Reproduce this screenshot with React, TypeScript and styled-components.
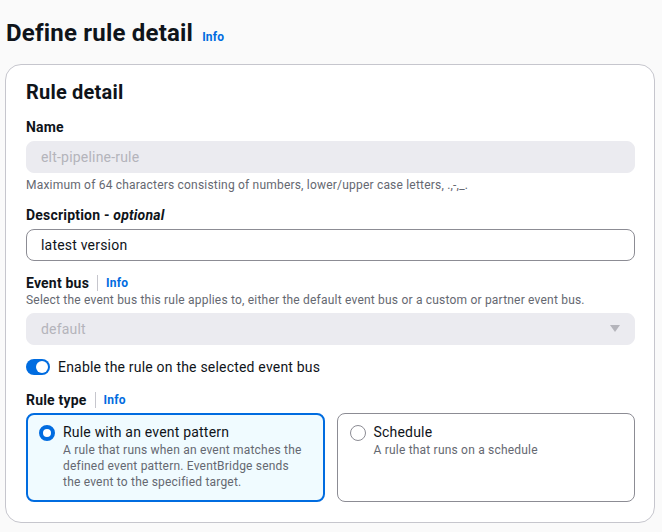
import React from "react";
import styled, { createGlobalStyle } from "styled-components";

const Global = createGlobalStyle`
  html, body { margin: 0; padding: 0; background: #fafafa; }
  body { font-family: Roboto, "Noto Sans", sans-serif; color: #0f141a; letter-spacing: 0.2px; -webkit-font-smoothing: antialiased; }
  * { box-sizing: border-box; }
`;

const Page = styled.div`
  padding: 18px 8px 8px 5px;
  width: 662px;
`;

const TitleRow = styled.div`
  display: flex;
  align-items: baseline;
  gap: 9px;
  padding-left: 1px;
`;

const H1 = styled.h1`
  margin: 0;
  font-size: 24px;
  line-height: 30px;
  font-weight: 700;
  color: #0f141a;
`;

const Link = styled.a`
  font-size: 12px;
  font-weight: 700;
  color: #006ce0;
  text-decoration: none;
`;

const Card = styled.section`
  margin-top: 16px;
  width: 650px;
  background: #fff;
  border: 1px solid #c6c6cd;
  border-radius: 16px;
  padding: 15px 19px 20px 20px;
`;

const H2 = styled.h2`
  margin: 0 0 14px;
  font-size: 20px;
  line-height: 24px;
  font-weight: 700;
`;

const Field = styled.div<{ $gap?: number }>`
  display: flex;
  flex-direction: column;
  margin-bottom: ${(p) => p.$gap ?? 13}px;
`;

const LabelRow = styled.div<{ $mb?: number }>`
  display: flex;
  align-items: center;
  gap: 8px;
  margin-bottom: ${(p) => p.$mb ?? 5}px;
`;

const Label = styled.label`
  font-size: 14px;
  line-height: 18px;
  font-weight: 700;
  em { font-weight: 700; font-style: italic; }
`;

const Sep = styled.span`
  width: 1px;
  height: 16px;
  background: #c6c6cd;
`;

const Help = styled.div<{ $top?: boolean }>`
  font-size: 12px;
  line-height: 16px;
  color: #656871;
  margin-top: ${(p) => (p.$top ? 4 : 0)}px;
  margin-bottom: ${(p) => (p.$top ? 0 : 5)}px;
`;

const Input = styled.div<{ $disabled?: boolean }>`
  height: 32px;
  border-radius: 8px;
  display: flex;
  align-items: center;
  justify-content: space-between;
  padding: 0 14px;
  font-size: 14px;
  border: 1px solid ${(p) => (p.$disabled ? "#ebebf0" : "#8c8c94")};
  background: ${(p) => (p.$disabled ? "#ebebf0" : "#fff")};
  color: ${(p) => (p.$disabled ? "#b4b4bb" : "#0f141a")};
`;

const ToggleRow = styled.div`
  display: flex;
  align-items: center;
  gap: 8px;
  height: 20px;
  margin-top: 12px;
  margin-bottom: 14px;
  font-size: 14px;
`;

const Toggle = styled.span`
  width: 24px;
  height: 16px;
  border-radius: 8px;
  background: #006ce0;
  position: relative;
  &::after {
    content: "";
    position: absolute;
    right: 2px;
    top: 2px;
    width: 12px;
    height: 12px;
    border-radius: 50%;
    background: #fff;
  }
`;

const Tiles = styled.div`
  display: grid;
  grid-template-columns: 1fr 1fr;
  gap: 12px;
`;

const Tile = styled.div<{ $selected?: boolean }>`
  height: 89px;
  border-radius: 8px;
  border: ${(p) => (p.$selected ? "2px solid #006ce0" : "1px solid #8c8c94")};
  background: ${(p) => (p.$selected ? "#f0fbff" : "#fff")};
  padding: ${(p) => (p.$selected ? "7px 16px 7px 11px" : "8px 16px 8px 12px")};
  display: flex;
  gap: 8px;
  align-items: flex-start;
`;

const Radio = styled.span<{ $checked?: boolean }>`
  flex: none;
  width: 16px;
  height: 16px;
  margin-top: 3px;
  border-radius: 50%;
  border: ${(p) => (p.$checked ? "4px solid #006ce0" : "1px solid #8c8c94")};
  background: #fff;
`;

const TileText = styled.div`
  display: flex;
  flex-direction: column;
`;

const TileTitle = styled.div`
  font-size: 14px;
  line-height: 20px;
`;

const TileDesc = styled.div`
  font-size: 12px;
  line-height: 16px;
  color: #656871;
`;

const Caret = () => (
  <svg width="10" height="8" viewBox="0 0 10 8">
    <path d="M0 0 H10 L5 7 Z" fill="#b4b4bb" />
  </svg>
);

export default function App() {
  return (
    <>
      <Global />
      <Page>
        <TitleRow>
          <H1>Define rule detail</H1>
          <Link>Info</Link>
        </TitleRow>
        <Card>
          <H2>Rule detail</H2>
          <Field>
            <LabelRow>
              <Label>Name</Label>
            </LabelRow>
            <Input $disabled>elt-pipeline-rule</Input>
            <Help $top>Maximum of 64 characters consisting of numbers, lower/upper case letters, .,-,_.</Help>
          </Field>
          <Field>
            <LabelRow>
              <Label>
                Description - <em>optional</em>
              </Label>
            </LabelRow>
            <Input>latest version</Input>
          </Field>
          <Field $gap={0}>
            <LabelRow $mb={0}>
              <Label>Event bus</Label>
              <Sep />
              <Link>Info</Link>
            </LabelRow>
            <Help>Select the event bus this rule applies to, either the default event bus or a custom or partner event bus.</Help>
            <Input $disabled>
              default
              <Caret />
            </Input>
          </Field>
          <ToggleRow>
            <Toggle />
            Enable the rule on the selected event bus
          </ToggleRow>
          <Field $gap={0}>
            <LabelRow $mb={4}>
              <Label>Rule type</Label>
              <Sep />
              <Link>Info</Link>
            </LabelRow>
            <Tiles>
              <Tile $selected>
                <Radio $checked />
                <TileText>
                  <TileTitle>Rule with an event pattern</TileTitle>
                  <TileDesc>
                    A rule that runs when an event matches the defined event pattern. EventBridge sends the event to the specified target.
                  </TileDesc>
                </TileText>
              </Tile>
              <Tile>
                <Radio />
                <TileText>
                  <TileTitle>Schedule</TileTitle>
                  <TileDesc>A rule that runs on a schedule</TileDesc>
                </TileText>
              </Tile>
            </Tiles>
          </Field>
        </Card>
      </Page>
    </>
  );
}
